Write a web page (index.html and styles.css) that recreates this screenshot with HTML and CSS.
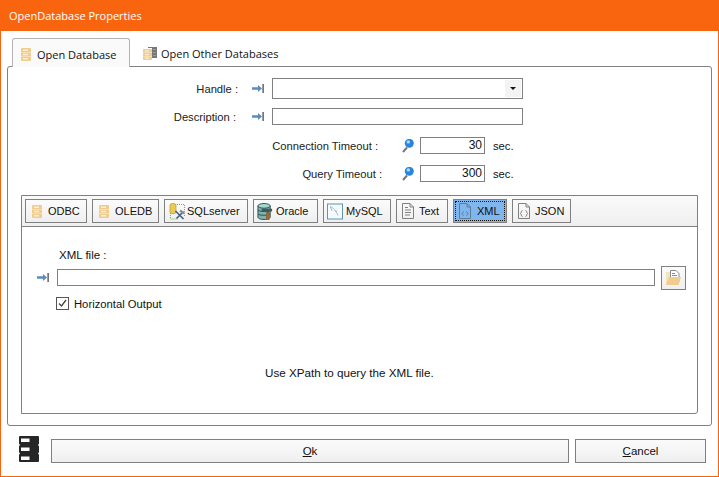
FILE: index.html
```html
<!DOCTYPE html>
<html lang="en">
<head>
<meta charset="utf-8">
<title>OpenDatabase Properties</title>
<link rel="stylesheet" href="styles.css">
</head>
<body>
<svg class="defs" width="0" height="0" aria-hidden="true">
  <symbol id="db" viewBox="0 0 10 13">
    <path fill="#f0cd8e" d="M1 0h8a1 1 0 0 1 1 1v3l-.5.500.5.500v3l-.5.500.5.500v3a1 1 0 0 1-1 1H1a1 1 0 0 1-1-1V9l.5-.500L0 8V5l.5-.500L0 4V1a1 1 0 0 1 1-1z"/>
    <path fill="#fbeed5" d="M2 1.500h5v1.500H2zM2 5.700h5v1.500H2zM2 10h5v1.500H2zM0 4.200h10v.6H0zM0 8.400h10v.6H0z"/>
  </symbol>
  <symbol id="arrow" viewBox="0 0 12 9">
    <path fill="#5a8cc4" d="M0 3.300h6V1l4 3.500L6 8V5.700H0z"/>
    <path fill="#757575" d="M10.300 0H12v9h-1.700z"/>
  </symbol>
  <symbol id="pin" viewBox="0 0 12 14">
    <path stroke="#777" stroke-width="2" fill="none" d="M5 8.500 1 13"/>
    <circle cx="7.300" cy="4.300" r="4.500" fill="#2a86dc"/>
    <circle cx="6.300" cy="2.900" r="1.700" fill="#a9dcff"/>
  </symbol>
</svg>

<div class="window">
  <header class="titlebar">OpenDatabase Properties</header>
  <main class="client">
    <nav class="tabs">
      <div class="tab tab-active"><svg class="ico-db"><use href="#db"/></svg>Open Database</div>
      <div class="tab">
        <svg class="ico-db2" viewBox="0 0 14 13">
          <path fill="#777" d="M5 0h9v11H5z"/>
          <path fill="#fff" d="M5 1h4v12H5z"/>
          <path fill="#9a9a9a" d="M10 2h3v1h-3zM10 5h3v1h-3zM10 8h3v1h-3z"/>
          <path fill="#f0cd8e" d="M1 2h7a1 1 0 0 1 1 1v9a1 1 0 0 1-1 1H1a1 1 0 0 1-1-1V3a1 1 0 0 1 1-1z"/>
          <path fill="#fbeed5" d="M2 3.200h4v1.200H2zM2 7h4v1.200H2zM2 10.500h4v1.200H2zM0 5.500h9v.6H0zM0 9.200h9v.6H0z"/>
        </svg>Open Other Databases</div>
    </nav>
    <section class="panel">
      <div class="row row-handle">
        <label class="lbl lbl-main">Handle :</label>
        <svg class="ico-arrow"><use href="#arrow"/></svg>
        <div class="field field-wide field-combo"><span class="combo-btn"><i class="caret"></i></span></div>
      </div>
      <div class="row row-desc">
        <label class="lbl lbl-desc">Description :</label>
        <svg class="ico-arrow"><use href="#arrow"/></svg>
        <div class="field field-wide field-desc"></div>
      </div>
      <div class="row row-time">
        <label class="lbl lbl-time">Connection Timeout :</label>
        <svg class="ico-pin"><use href="#pin"/></svg>
        <div class="field field-num">30</div>
        <span class="unit">sec.</span>
      </div>
      <div class="row row-time row-query">
        <label class="lbl lbl-query">Query Timeout :</label>
        <svg class="ico-pin"><use href="#pin"/></svg>
        <div class="field field-num">300</div>
        <span class="unit">sec.</span>
      </div>

      <div class="inner">
        <div class="toolbar">
          <button class="tb tb-odbc"><svg class="ico-db-tb"><use href="#db"/></svg>ODBC</button>
          <button class="tb tb-oledb"><svg class="ico-db-tb"><use href="#db"/></svg>OLEDB</button>
          <button class="tb tb-sql">
            <svg class="ico-16" viewBox="0 0 16 17">
              <path fill="none" stroke="#5fbf3f" stroke-dasharray="1 1" d="M4 1.500h11.500v12M1.500 10v6h7"/>
              <path fill="#eccb55" stroke="#b08f2a" stroke-width=".6" d="M1 2c0-2 6-2 6 0v7.500c0 1.500-6 1.500-6 0z"/>
              <path stroke="#47647f" stroke-width="1.700" d="M6.500 8l8 8M14.500 8.500l-7 7"/>
              <path stroke="#8a8f96" stroke-width="2.200" d="M11 7.500l4 3"/>
            </svg>SQLserver</button>
          <button class="tb tb-oracle">
            <svg class="ico-16 ico-ora" viewBox="0 0 17 18">
              <path d="M1 3v12c0 1.500 3 2.500 6.500 2.500S14 16.500 14 15V3" fill="#7fb3ae" stroke="#274d4d"/>
              <ellipse cx="7.500" cy="3" rx="6.500" ry="2.500" fill="#a6d6d0" stroke="#274d4d"/>
              <path d="M1 7.500c1 2 12 2 13 0M1 11.500c1 2 12 2 13 0" fill="none" stroke="#274d4d"/>
              <path d="M5 6h11v3H13v9h-3V9H5z" fill="#3f5a5a"/>
              <path d="M10 10h3v8h-3z" fill="#a8652f"/>
            </svg>Oracle</button>
          <button class="tb tb-mysql">
            <svg class="ico-16" viewBox="0 0 16 16">
              <rect x=".5" y=".5" width="15" height="15" fill="#f4fafd" stroke="#5f96b0"/>
              <path d="M3 3c3 1 6 4 8 9M3.500 3.500l1.500 4M8 7l2 1" fill="none" stroke="#9dbccb"/>
            </svg>MySQL</button>
          <button class="tb tb-text">
            <svg class="ico-doc" viewBox="0 0 12 16">
              <path fill="none" stroke="#808080" d="M.5.500h7.500l3.500 3.500v11.500H.5zM8 .500V4h3.500M3 4.500h3M3 7h6M3 9.500h6M3 12h5"/>
            </svg>Text</button>
          <button class="tb tb-xml">
            <span class="focus">
              <svg class="ico-doc" viewBox="0 0 12 16">
                <path fill="none" stroke="#5f7d9b" d="M.5.500h7.500l3.500 3.500v11.500H.5zM8 .500V4h3.500"/>
                <path fill="none" stroke="#5a7a9a" d="M4.500 8.500 3 10.500l1.500 2M7.500 8.500l1.500 2-1.500 2"/>
              </svg>XML</span>
          </button>
          <button class="tb tb-json">
            <svg class="ico-doc" viewBox="0 0 12 16">
              <path fill="none" stroke="#808080" d="M.5.500h7.500l3.500 3.500v11.500H.5zM8 .500V4h3.500"/>
              <path fill="none" stroke="#808080" d="M4.500 7.500C3 7.500 3.500 10 2.500 10.500c1 .5.500 3 2 3M7.500 7.500c1.500 0 1 2.500 2 3-1 .5-.5 3-2 3"/>
            </svg>JSON</button>
        </div>
        <div class="inner-body">
          <div class="xml-label">XML file :</div>
          <div class="xml-row">
            <svg class="ico-arrow"><use href="#arrow"/></svg>
            <div class="field field-xml"></div>
            <button class="browse">
              <svg class="ico-folder" viewBox="0 0 15 15">
                <path fill="#f6e2bb" d="M0 2h4v11H0z"/>
                <path fill="#fff" stroke="#8a8a8a" d="M4.500.500h5.500l3 3v8h-8.500z"/>
                <path stroke="#8a8a8a" d="M6 3.500h3M6 5.500h5"/>
                <path fill="#f0cd8e" d="M3 7h12l-2.500 8H0z"/>
              </svg>
            </button>
          </div>
          <div class="check-row">
            <span class="check"><svg viewBox="0 0 11 11"><path fill="none" stroke="#444" stroke-width="1.300" d="M2 5.500l2.500 2.500 4.500-6"/></svg></span>
            <span class="check-text">Horizontal Output</span>
          </div>
          <p class="hint">Use XPath to query the XML file.</p>
        </div>
      </div>
    </section>
    <footer class="footer">
      <svg class="ico-stack" viewBox="0 0 20 26">
        <path fill="#262626" d="M1 0h18a1 1 0 0 1 1 1v6.500a1 1 0 0 1-.8 1v1a1 1 0 0 1 .8 1V16a1 1 0 0 1-.8 1v1a1 1 0 0 1 .8 1v6a1 1 0 0 1-1 1H1a1 1 0 0 1-1-1v-6a1 1 0 0 1 .8-1v-1a1 1 0 0 1-.8-1v-5.500a1 1 0 0 1 .8-1v-1a1 1 0 0 1-.8-1V1a1 1 0 0 1 1-1z"/>
        <path fill="#fff" d="M2 2.500h8.500V6H2zM2 11.500h8.500V15H2zM2 20.500h8.500V24H2z"/>
      </svg>
      <button class="btn btn-ok"><u>O</u>k</button>
      <button class="btn btn-cancel"><u>C</u>ancel</button>
    </footer>
  </main>
</div>
</body>
</html>
```
FILE: styles.css
```css
* { box-sizing: border-box; }
html, body { margin: 0; padding: 0; height: 100%; }
body { font: 11.2px "Liberation Sans", Arial, sans-serif; color: #111; background: #fff; overflow: hidden; }
.defs { display: block; height: 0; }
button { font: inherit; color: inherit; margin: 0; }
svg { display: block; flex: none; }

.window { width: 719px; height: 477px; border: 1px solid #f9650f; border-top: 0; display: flex; flex-direction: column; }
.titlebar { height: 31px; margin: 0 -1px; padding-left: 9px; background: #f9650f; color: #fff; font: 11px/31px "Open Sans", sans-serif; }
.client { flex: 1; display: flex; flex-direction: column; padding: 7px 6px 0; min-height: 0; background: #fff; }

.tabs { display: flex; height: 28px; padding-left: 5px; position: relative; z-index: 1; }
.tab { display: flex; align-items: center; font: 11px "Open Sans", sans-serif; color: #111; padding: 2px 0 0; }
.tab-active { width: 118px; height: 29px; padding-left: 8px; gap: 6px; background: #fafafa; border: 1px solid #b4b4b4; border-bottom: 0; border-radius: 3px 3px 0 0; }
.tab + .tab { margin-left: 13px; gap: 4px; }
.ico-db { width: 10px; height: 13px; }
.ico-db2 { width: 14px; height: 13px; }

.panel { height: 360px; border: 1px solid #808080; border-radius: 3px; padding: 11px 13px 0; }
.row { display: flex; align-items: center; }
.lbl { text-align: right; color: #222; }
.lbl-main { width: 217px; margin-right: 1px; }
.lbl-desc { width: 215px; margin-right: 3px; }
.lbl-time { width: 357px; }
.lbl-query { width: 361px; margin-right: -4px; }
.ico-arrow { width: 12px; height: 9px; margin-left: 13px; }
.field { border: 1px solid #808080; background: #fff; }
.field-wide { width: 251px; margin-left: 8px; }
.row-handle { height: 21px; }
.field-combo { height: 21px; position: relative; }
.combo-btn { position: absolute; right: 1px; top: 1px; bottom: 1px; width: 16px; background: #f3f3f3; display: flex; align-items: center; justify-content: center; }
.caret { width: 0; height: 0; border: 3px solid transparent; border-top: 3px solid #111; border-bottom: 0; }
.row-desc { height: 17px; margin-top: 9px; }
.field-desc { height: 17px; }

.row-time { height: 17px; margin-top: 12px; }
.row-query { margin-top: 11px; }
.ico-pin { width: 12px; height: 14px; margin-left: 24px; }
.field-num { width: 65px; height: 17px; margin-left: 6px; padding-right: 2px; text-align: right; line-height: 15px; font-size: 12px; }
.unit { margin-left: 8px; }

.inner { height: 219px; margin-top: 13px; border: 1px solid #808080; border-radius: 0 0 3px 0; display: flex; flex-direction: column; }
.toolbar { height: 31px; padding: 3px 3px 0; display: flex; gap: 5px; border-bottom: 1px solid #808080; background: linear-gradient(#fafafa, #efefef); flex: none; }
.tb { height: 24px; padding: 0 0 0 6px; border: 1px solid #808080; background: linear-gradient(#fbfbfb, #efefef); display: flex; align-items: center; gap: 5px; font-size: 11px; }
.ico-db-tb { width: 10px; height: 13px; }
.tb-odbc { width: 62px; gap: 6px; }
.tb-oledb { width: 67px; gap: 6px; }
.tb-sql { width: 84px; padding-left: 4px; gap: 2px; }
.tb-oracle { width: 65px; padding-left: 3px; gap: 3px; }
.tb-mysql { width: 68px; padding-left: 3px; gap: 3px; }
.tb-text { width: 52px; padding-left: 5px; gap: 5px; }
.tb-xml { width: 54px; padding: 1px; background: #7fb6ee; }
.tb-json { width: 59px; padding-left: 5px; gap: 5px; }
.focus { flex: 1; height: 100%; display: flex; align-items: center; gap: 6px; padding-left: 3px; border: 1px dotted #111; }
.ico-16 { width: 16px; height: 17px; }
.ico-doc { width: 12px; height: 16px; }

.inner-body { flex: 1; padding: 21px 0 0; }
.xml-label { margin-left: 37px; height: 15px; line-height: 15px; font-size: 11.5px; }
.xml-row { display: flex; align-items: center; margin-top: 6px; padding-left: 15px; height: 17px; }
.xml-row .ico-arrow { margin-left: 0; }
.field-xml { width: 598px; height: 17px; margin-left: 8px; }
.browse { width: 25px; height: 24px; margin-left: 6px; padding: 0; border: 1px solid #808080; background: linear-gradient(#fbfbfb, #efefef); display: flex; align-items: center; justify-content: center; }
.ico-folder { width: 15px; height: 15px; }
.check-row { display: flex; align-items: center; gap: 5px; margin: 10px 0 0 34px; height: 15px; }
.check { width: 13px; height: 13px; border: 1px solid #555; background: #fff; display: block; }
.check svg { width: 11px; height: 11px; }
.check-text { font-size: 11.25px; }
.hint { margin: 55px 0 0; padding-left: 243px; line-height: 14px; font-size: 11.66px; }

.footer { display: flex; align-items: flex-start; height: 24px; margin-top: 13px; padding-left: 12px; }
.ico-stack { width: 20px; height: 26px; margin-top: -3px; }
.btn { height: 24px; padding: 0; border: 1px solid #808080; background: linear-gradient(#fbfbfb, #efefef); font-size: 11.5px; }
.btn-ok { width: 518px; margin-left: 12px; }
.btn-cancel { width: 131px; margin-left: 6px; }
```
